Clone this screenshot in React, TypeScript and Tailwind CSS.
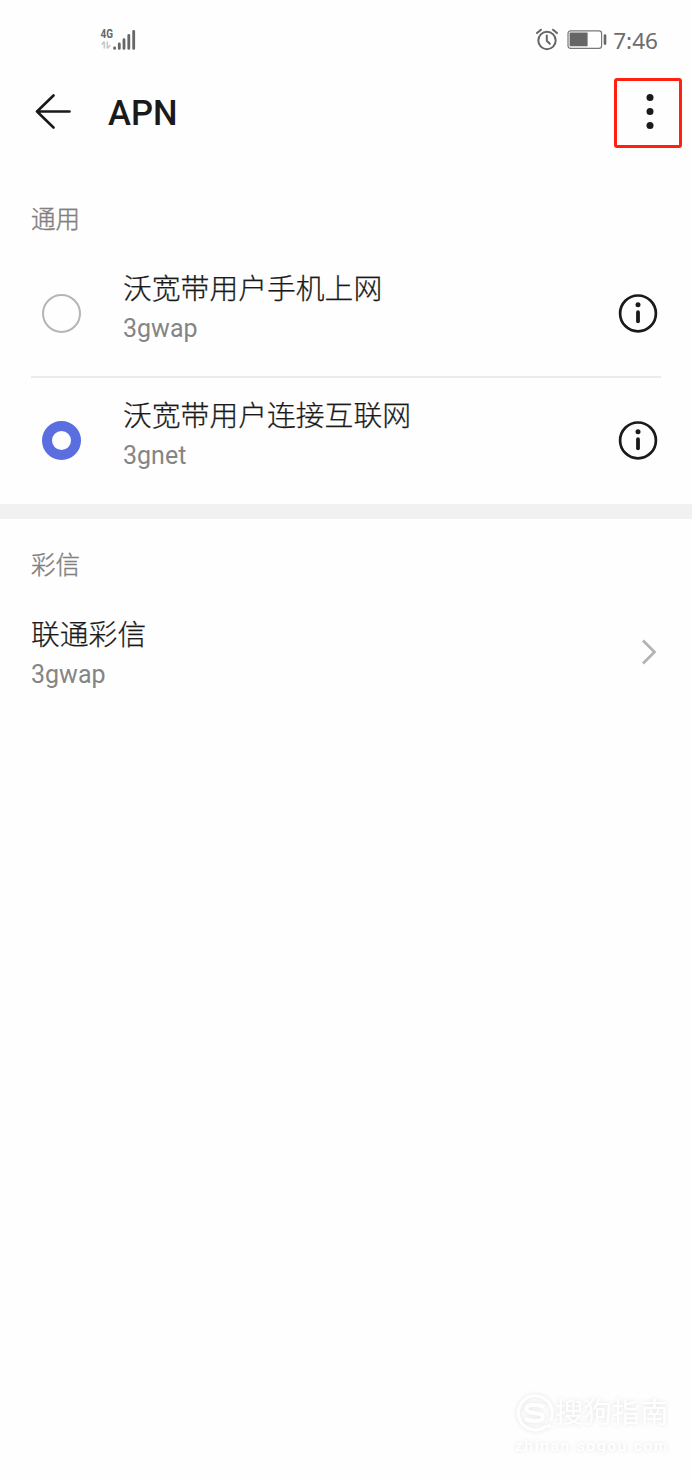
import type { ReactNode } from "react";

function SignalIcon() {
  return (
    <svg width="38" height="26" viewBox="0 0 38 26" fill="none">
      <text
        x="0.5"
        y="11"
        fontSize="13"
        fontWeight="700"
        textLength="12.5"
        lengthAdjust="spacingAndGlyphs"
        fill="#666"
      >
        4G
      </text>
      <path
        d="M4.3 21.5v-7M4.3 14.5l-2.6 3M7.3 14.5v7M7.3 21.5l3-3.4"
        stroke="#c8c8c8"
        strokeWidth="1.6"
      />
      <g stroke="#666" strokeWidth="2.8" strokeLinecap="round">
        <path d="M14.6 20.8v.6M19.3 17v4.4M24 12.7v8.7M28.8 8.3v13.1M33.7 4.3v17.1" />
      </g>
    </svg>
  );
}

function AlarmIcon() {
  return (
    <svg
      width="24"
      height="24"
      viewBox="0 0 24 24"
      fill="none"
      stroke="#666"
      strokeWidth="2"
      strokeLinecap="round"
      strokeLinejoin="round"
    >
      <circle cx="12" cy="12.5" r="8.7" />
      <path d="M11.8 7.5v5.2l3 3M2 5.1 6 1.7M22 5.1l-4-3.4" />
    </svg>
  );
}

function BatteryIcon() {
  return (
    <svg width="40" height="20" viewBox="0 0 40 20" fill="none">
      <rect x="1" y="0.8" width="33.6" height="17.6" rx="2.6" stroke="#777" strokeWidth="1.2" />
      <rect x="2.6" y="2.6" width="18" height="13.6" rx="0.6" fill="#666" />
      <path d="M38 5.6v8" stroke="#666" strokeWidth="2.6" strokeLinecap="round" />
    </svg>
  );
}

function StatusBar() {
  return (
    <div className="flex h-20 items-center pl-[100px] pr-[34px]">
      <SignalIcon />
      <div className="ml-auto flex items-center">
        <AlarmIcon />
        <div className="ml-2 mr-[6px]">
          <BatteryIcon />
        </div>
        <span className="pt-[2px] font-['Noto_Sans',sans-serif] text-[22.6px] leading-none text-[#6c6c6c]">
          7:46
        </span>
      </div>
    </div>
  );
}

function Header() {
  return (
    <header className="flex h-[66px] items-center pl-[34px] pr-[10px]">
      <svg
        width="38"
        height="38"
        viewBox="0 0 38 38"
        fill="none"
        stroke="#1a1a1a"
        strokeWidth="2.6"
        strokeLinecap="round"
        strokeLinejoin="round"
      >
        <path d="M35.5 17.5H3M19.5 1.5 3 17.5l16.5 16" />
      </svg>
      <h1 className="ml-9 text-[34.6px] font-medium leading-none text-[#1a1a1a]">
        APN
      </h1>
      <button className="ml-auto flex h-[70px] w-[68px] items-center justify-center rounded-[3px] border-3 border-[#ff2010] pb-[2px] pl-[3px]">
        <svg width="8" height="36" viewBox="0 0 8 36" fill="#1a1a1a">
          <circle cx="4" cy="3.5" r="3.5" />
          <circle cx="4" cy="17.5" r="3.5" />
          <circle cx="4" cy="31.5" r="3.5" />
        </svg>
      </button>
    </header>
  );
}

function SectionTitle({ children }: { children: ReactNode }) {
  return (
    <h2 className="pl-[31px] text-[24.5px] font-light leading-10 text-[#808080] [-webkit-text-stroke:0.4px_#808080]">
      {children}
    </h2>
  );
}

function Label({ title, value }: { title: string; value: string }) {
  return (
    <div>
      <div className="text-[28.8px] font-light leading-10 text-[#1a1a1a] [-webkit-text-stroke:0.25px_#1a1a1a]">
        {title}
      </div>
      <div className="text-[25px] leading-10 text-[#858585]">{value}</div>
    </div>
  );
}

function InfoIcon() {
  return (
    <svg width="40" height="40" viewBox="0 0 40 40" fill="none">
      <circle cx="20" cy="19.4" r="17.9" stroke="#1a1a1a" strokeWidth="2.7" />
      <circle cx="20" cy="10.7" r="2.5" fill="#1a1a1a" />
      <path d="M20 18.2v9.1" stroke="#1a1a1a" strokeWidth="3.8" strokeLinecap="round" />
    </svg>
  );
}

function ApnRow({
  title,
  value,
  checked,
}: {
  title: string;
  value: string;
  checked?: boolean;
}) {
  return (
    <div className="flex h-[127px] items-center pl-[42px] pr-[34px]">
      {checked ? (
        <span className="size-[39px] rounded-full border-10 border-[#5a6ee0]" />
      ) : (
        <span className="size-[39px] rounded-full border-2 border-[#b5b5b5]" />
      )}
      <div className="ml-[42px] pb-[9px]">
        <Label title={title} value={value} />
      </div>
      <div className="ml-auto">
        <InfoIcon />
      </div>
    </div>
  );
}

function Watermark() {
  return (
    <div className="ml-auto mr-[23px] mt-auto mb-[22px] w-[154px] text-white [filter:drop-shadow(0_0_2px_rgba(0,0,0,0.11))]">
      <div className="flex items-center">
        <svg width="40" height="40" viewBox="0 0 40 40" fill="none" stroke="#fff">
          <path d="M30.5 32.5A17 17 0 1 1 36 25.5" strokeWidth="3" strokeLinecap="round" />
          <path
            d="M29 13C24.5 10.3 11.5 10 11.5 15c0 5.5 16.5 2.7 16.5 8.2 0 5-13 4.5-18 1.3"
            strokeWidth="4"
          />
          <circle cx="34" cy="32" r="1.5" fill="#fff" />
        </svg>
        <span className="whitespace-nowrap text-[28.4px] leading-10">搜狗指南</span>
      </div>
      <div className="whitespace-nowrap text-[15px] font-medium leading-6 tracking-[1.9px]">
        zhinan.sogou.com
      </div>
    </div>
  );
}

export default function App() {
  return (
    <main className="flex h-[1480px] w-[692px] flex-col overflow-hidden bg-[#fefefe] font-[Roboto,'Noto_Sans_CJK_SC',sans-serif]">
      <StatusBar />
      <Header />
      <section className="pt-[54px]">
        <SectionTitle>通用</SectionTitle>
        <div className="pt-[10px]">
          <ApnRow title="沃宽带用户手机上网" value="3gwap" />
          <div className="-my-px mx-[31px] h-0.5 bg-[#ebebeb]" />
          <ApnRow title="沃宽带用户连接互联网" value="3gnet" checked />
        </div>
      </section>
      <div className="h-[15px] bg-[#f1f1f1]" />
      <section className="pt-[27px]">
        <SectionTitle>彩信</SectionTitle>
        <div className="flex items-center pl-[31px] pr-[34px] pt-[29px]">
          <Label title="联通彩信" value="3gwap" />
          <svg
            className="ml-auto"
            width="18"
            height="32"
            viewBox="0 0 18 32"
            fill="none"
            stroke="#b3b3b3"
            strokeWidth="2.7"
          >
            <path d="M3 1.5 14.5 13 3 24.5" />
          </svg>
        </div>
      </section>
      <Watermark />
    </main>
  );
}
